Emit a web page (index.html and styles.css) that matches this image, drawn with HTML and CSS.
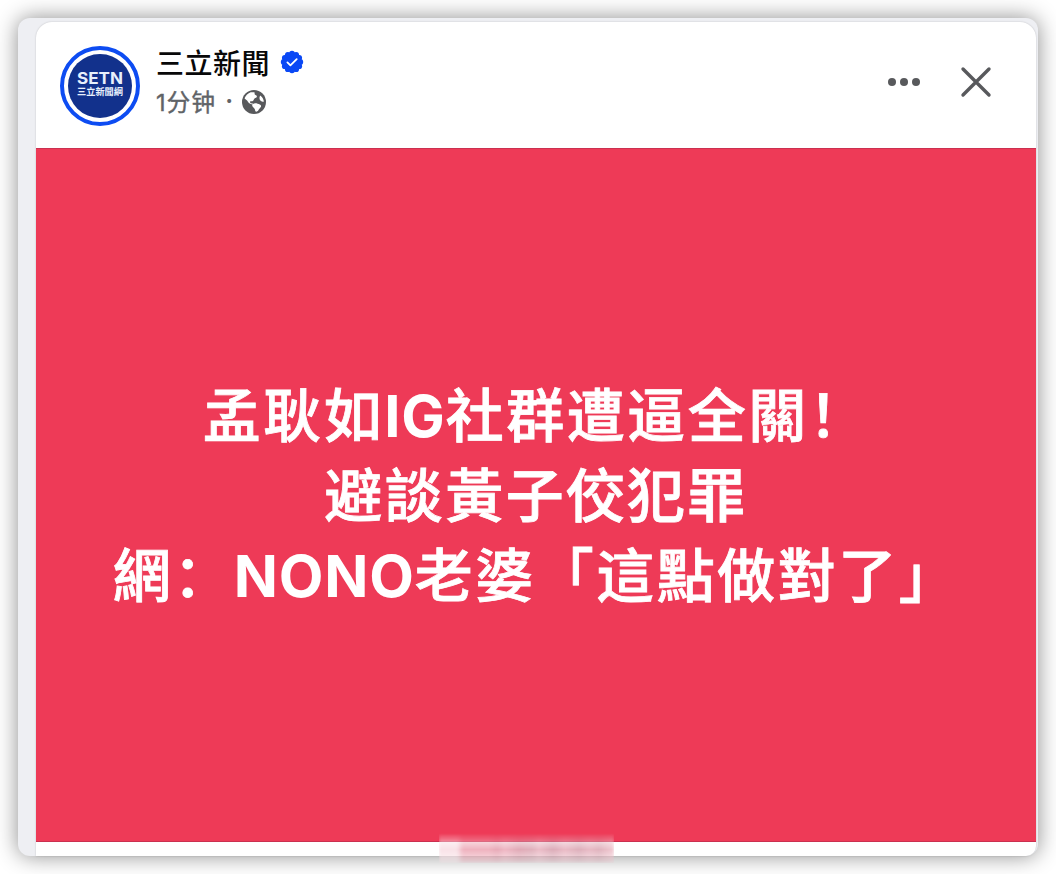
FILE: index.html
```
<!DOCTYPE html>
<html lang="zh-CN">
<head>
  <meta charset="UTF-8">
  <title>三立新聞</title>
  <link rel="stylesheet" href="styles.css">
</head>
<body>
<div id="window">
  <div class="post">
    <div class="header">
      <div class="avatar">
        <div class="logo">
          <svg width="64" height="64" viewBox="0 0 64 64">
            <text class="logo-en" x="9" y="30" textLength="46" lengthAdjust="spacingAndGlyphs">SETN</text>
            <text class="logo-zh" x="9" y="41" textLength="46" lengthAdjust="spacingAndGlyphs">三立新聞網</text>
          </svg>
        </div>
      </div>
      <div class="info">
        <div class="name">
          <span>三立新聞</span>
          <svg class="badge" width="24" height="24" viewBox="-12 -12 24 24">
            <g fill="#0a48f5">
              <circle r="9.700"/>
              <circle cx="0" cy="-8.300" r="2.900"/>
              <circle cx="4.150" cy="-7.190" r="2.900"/>
              <circle cx="7.190" cy="-4.150" r="2.900"/>
              <circle cx="8.300" cy="0" r="2.900"/>
              <circle cx="7.190" cy="4.150" r="2.900"/>
              <circle cx="4.150" cy="7.190" r="2.900"/>
              <circle cx="0" cy="8.300" r="2.900"/>
              <circle cx="-4.150" cy="7.190" r="2.900"/>
              <circle cx="-7.190" cy="4.150" r="2.900"/>
              <circle cx="-8.300" cy="0" r="2.900"/>
              <circle cx="-7.190" cy="-4.150" r="2.900"/>
              <circle cx="-4.150" cy="-7.190" r="2.900"/>
            </g>
            <path d="M-4.600 .4l3 3L4.700-2.800" fill="none" stroke="#fff" stroke-width="1.800" stroke-linecap="round" stroke-linejoin="round"/>
          </svg>
        </div>
        <div class="time">
          <span class="ago">1分钟</span>
          <span class="dot">·</span>
          <svg width="24" height="24" viewBox="0 0 24 24">
            <circle cx="12" cy="12" r="12" fill="#58595c"/>
            <g fill="#fff">
              <path d="M2.600 8.200C3.800 5.300 6 3.200 8.700 2.300L12.300 2.200c.8.700-.1 1.500.5 2.300.7.800 2 .8 2.100 1.800.1 1.200-1.500 1.400-2.400 2.200-.8.800-.7 2-1.700 2.600-.9.500-1.900-.1-2.600.5-.6.600.1 1.500 1 1.700 1 .3 1.700.1 2.400.9-1.200.5-2.700.2-3.900-.6-1.600-1-2-2.700-3.200-3.600-.6-.5-1.300-.8-1.900-1.800z"/>
              <path d="M10.700 14.300c1.300-1.300 3.300-1.300 4.900-.6 1.300.6 3.400.6 3.500 2.200.1 1.400-1.200 2.100-1.900 3.200-.7 1.100-1.400 2.500-2.800 2.700-1.300 0-1.200-1.700-1.700-2.800-.5-1.300-2-1.700-2.400-3-.2-.6 0-1.200.4-1.700z"/>
              <path d="M18.300 5.500c1.900 1.500 3.200 3.500 3.600 5.900-1.200.7-2.700.2-3.500-.8-1.100-1.400-1.300-3.700-.1-5.100z"/>
            </g>
          </svg>
        </div>
      </div>
      <div class="actions">
        <svg width="32" height="32" viewBox="0 0 32 32" fill="#58595c">
          <circle cx="4" cy="16" r="4"/>
          <circle cx="16" cy="16" r="4"/>
          <circle cx="28" cy="16" r="4"/>
        </svg>
        <svg width="32" height="32" viewBox="0 0 32 32">
          <path d="M3 3l26 26M29 3L3 29" stroke="#58595c" stroke-width="3.400" stroke-linecap="round"/>
        </svg>
      </div>
    </div>
    <div class="content">
      <p>孟耿如<b>IG</b>社群遭逼全關！</p>
      <p>避談黃子佼犯罪</p>
      <p>網：<b>NONO</b>老婆「這點做對了」</p>
    </div>
  </div>
  <div class="smudge"></div>
</div>
</body>
</html>
```

FILE: styles.css
```
*{padding: 0; margin: 0; box-sizing: border-box;}
body{
  height: 874px;
  padding: 18px;
  overflow: hidden;
  background-color: #fff;
  font-family: Inter, "Noto Sans CJK SC", sans-serif;
}
svg{
  display: block;
}
#window{
  position: relative;
  width: 1020px;
  height: 838px;
  padding: 4px 2px 0 18px;
  border-radius: 12px;
  background-color: #eeeff3;
  box-shadow: 0 0 22px rgba(0,0,0,.45);
}
.post{
  height: 834px;
  border-radius: 16px 16px 10px 0;
  overflow: hidden;
  background-color: #fff;
  box-shadow: 0 0 2px rgba(0,0,0,.2);
}
.header{
  display: flex;
  height: 126px;
  padding: 24px 44px 0 24px;
}
.avatar{
  width: 80px;
  height: 80px;
  padding: 4px;
  border: 4px solid #0d4cf2;
  border-radius: 50%;
}
.logo{
  width: 64px;
  height: 64px;
  border-radius: 50%;
  overflow: hidden;
  background-color: #12318c;
}
.logo text{
  fill: #e8f0fc;
}
.logo-en{
  font-size: 15.5px;
  font-weight: 700;
}
.logo-zh{
  font-size: 9.5px;
  font-weight: 700;
}
.info{
  padding-left: 16px;
}
.name{
  display: flex;
  align-items: center;
  gap: 10px;
  height: 32px;
  font-size: 28px;
  font-weight: 500;
  letter-spacing: .5px;
  color: #080809;
}
.badge{
  flex: none;
}
.time{
  display: flex;
  align-items: center;
  height: 40px;
  margin-top: 2px;
  font-size: 23.5px;
  color: #606367;
}
.ago{
  margin-top: 1px;
  letter-spacing: 1.2px;
  -webkit-text-stroke: .4px #606367;
}
.time svg{
  margin-top: 4px;
}
.dot{
  width: 26px;
  font-weight: 700;
  text-align: center;
}
.actions{
  display: flex;
  gap: 40px;
  margin-left: auto;
  padding-top: 20px;
}
.content{
  display: flex;
  flex-direction: column;
  justify-content: center;
  height: 694px;
  padding-top: 1px;
  border-top: 1px solid #cb3050;
  border-bottom: 1px solid #cb3050;
  background-color: #ee3a57;
}
.content p{
  line-height: 80px;
  font-size: 58px;
  font-weight: 500;
  letter-spacing: 2.5px;
  text-align: center;
  white-space: nowrap;
  color: #fff;
  -webkit-text-stroke: .8px #fff;
}
.content b{
  font-weight: 700;
  letter-spacing: .8px;
  -webkit-text-stroke: 0;
}
.smudge{
  position: absolute;
  left: 421px;
  bottom: -7px;
  width: 175px;
  height: 30px;
  background: linear-gradient(90deg, #f8dfe5 0 18px, #edaab8 24px 50px, #e4a0af 58px, #edb0be 66px, #dda0ae 80px, #ddaab6 94px, #eab6c2 100px, #d7a2b0 114px, #e8b4c0 126px, #d9a6b3 140px, #e6b3bf 150px, #dcaab6 160px, #efc2cc 174px);
  -webkit-mask-image: linear-gradient(transparent, rgba(0,0,0,.9) 55%, rgba(0,0,0,.3));
  mask-image: linear-gradient(transparent, rgba(0,0,0,.9) 55%, rgba(0,0,0,.3));
  filter: blur(1.5px);
}
```
